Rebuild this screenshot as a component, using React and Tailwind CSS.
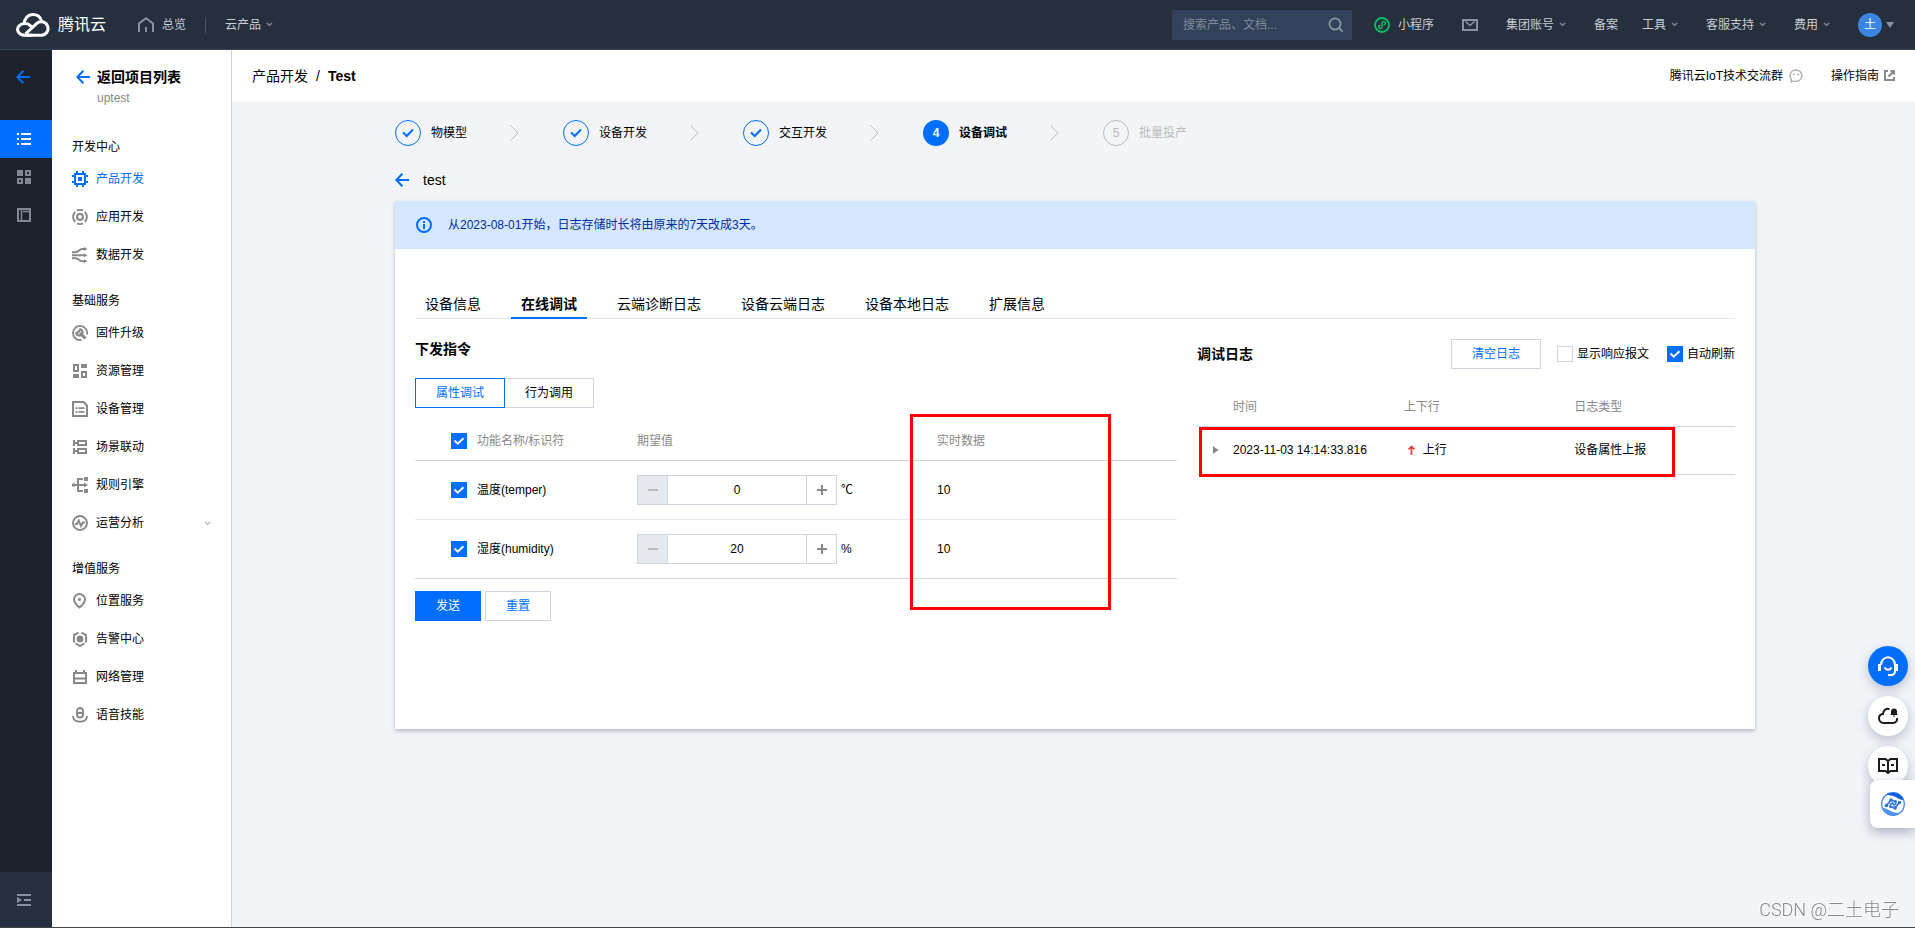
import { useState } from "react";

/* ---------- icons ---------- */

const CloudLogo = () => (
  <svg width="34" height="24" viewBox="0 0 34 24" fill="none" stroke="#fff" strokeWidth="3">
    <path d="M8 11.2C8.3 5.6 12 1.6 17 1.6c4 0 7.200 2.300 8.400 6" />
    <path d="M16.500 22.300H9a7.200 5.900 0 1 1 5-10l3.200 2.900" />
    <path d="M10.500 22.300h15a6.800 6.800 0 1 0-5-11.700L9.500 21" />
  </svg>
);

const HomeIcon = () => (
  <svg width="16" height="16" viewBox="0 0 16 16" fill="none" stroke="#8a929e" strokeWidth="2">
    <path d="M1 15V6.500L8 1.200l7 5.300V15" />
    <path d="M8 10v5" />
  </svg>
);

const Chevron = ({ color = "#7b8492" }) => (
  <svg width="7" height="5" viewBox="0 0 7 5" fill="none" stroke={color} strokeWidth="1.500">
    <path d="M1 1l2.500 2.500L6 1" />
  </svg>
);

const SearchIcon = () => (
  <svg width="16" height="16" viewBox="0 0 16 16" fill="none" stroke="#8b95a3" strokeWidth="1.800">
    <circle cx="7" cy="7" r="5.600" />
    <path d="M11 11l3.600 3.600" />
  </svg>
);

const MiniAppIcon = () => (
  <svg width="16" height="16" viewBox="0 0 16 16" fill="none" stroke="#07c160">
    <circle cx="8" cy="8" r="7" strokeWidth="1.800" />
    <path
      d="M6.300 8.100a1.700 1.700 0 1 0 1.700 1.900V6a1.700 1.700 0 1 1 1.700 1.900"
      strokeWidth="1.400"
    />
  </svg>
);

const MailIcon = () => (
  <svg width="16" height="12" viewBox="0 0 16 12" fill="none" stroke="#8a929e" strokeWidth="2">
    <path d="M1 1h14v10H1z" />
    <path d="M3.500 2.500L8 6.500l4.500-4" strokeWidth="1.600" />
  </svg>
);

const BackArrow = () => (
  <svg width="14" height="14" viewBox="0 0 14 14" fill="none" stroke="#006eff" strokeWidth="2">
    <path d="M7.300 .8L1.400 7l5.900 6.200M1.500 7H14" />
  </svg>
);

const ListIcon = () => (
  <svg width="14" height="12" viewBox="0 0 14 12" fill="#fff">
    <path d="M0 0h2v2H0zM4 0h10v2H4zM0 5h2v2H0zM4 5h10v2H4zM0 10h2v2H0zM4 10h10v2H4z" />
  </svg>
);

const BlocksIcon = () => (
  <svg width="14" height="14" viewBox="0 0 14 14" fill="#7f8893" fillRule="evenodd">
    <path d="M0 0h6v6H0zM8 0h6v6H8zM10 2v2h2V2zM0 8h6v6H0zM2 10v2h2v-2zM8 8h6v6H8z" />
  </svg>
);

const PanelIcon = () => (
  <svg width="14" height="14" viewBox="0 0 14 14" fill="none" stroke="#7f8893">
    <path d="M1 1h12v12H1z" strokeWidth="2" />
    <path d="M4.500 1v12M6 3.500h6" strokeWidth="1.500" />
  </svg>
);

const CollapseIcon = () => (
  <svg width="14" height="12" viewBox="0 0 14 12" fill="#8a929e">
    <path d="M0 0h14v2H0zM7 5h7v2H7zM0 10h14v2H0zM0 3l5 3-5 3z" />
  </svg>
);

const ExternalIcon = () => (
  <svg width="11" height="11" viewBox="0 0 11 11" fill="none" stroke="#888" strokeWidth="2">
    <path d="M4 1H1v9h9V7M6.500 1H10v3.500M10 1L4.500 6.500" />
  </svg>
);

const ChatIcon = () => (
  <svg width="14" height="14" viewBox="0 0 14 14" fill="none" stroke="#aaa" strokeWidth="1.300">
    <path d="M7 .8a6 5.800 0 1 1-2.300 11.200L2 13l.5-2.600A6 5.800 0 0 1 7 .8z" />
    <circle cx="4.800" cy="5.600" r="1" fill="#aaa" stroke="none" />
    <circle cx="9.200" cy="5.600" r="1" fill="#aaa" stroke="none" />
  </svg>
);

const menuIcons = {
  chip: (
    <>
      <path d="M3 3h10v10H3z" />
      <path d="M7 7h2v2H7z" />
      <path d="M5 0v2M11 0v2M5 14v2M11 14v2M0 5h2M0 11h2M14 5h2M14 11h2" />
    </>
  ),
  target: (
    <>
      <circle cx="8" cy="8" r="3" />
      <path
        strokeWidth="1.900"
        d="M5 1.600a7.200 7.200 0 0 1 6 0M5 14.400a7.200 7.200 0 0 0 6 0M3.200 3a7 7 0 0 0 0 10M12.800 3a7 7 0 0 1 0 10"
      />
    </>
  ),
  flow: (
    <>
      <path
        strokeWidth="2"
        d="M0 5.200h3.500C7 5.200 7 2 10.500 2H13M0 8.200h13M0 11.200h3.500c3.500 0 3.500 3 7 3H13"
      />
      <path fill="currentColor" stroke="none" d="M12 0l3.500 2L12 4zM12 6.200l3.500 2-3.500 2zM12 12.200l3.500 2-3.500 1.800z" />
    </>
  ),
  wrench: (
    <>
      <path strokeWidth="1.800" d="M9.500 15A7.100 7.100 0 1 1 15 9.500" />
      <path strokeWidth="3" d="M8 8l5.500 5.500" />
      <path strokeWidth="2.200" d="M8.300 4.300L6.800 6.800 4.300 8.300a3.300 3.300 0 0 0 5.700 1 3.300 3.300 0 0 0-1.700-5z" />
    </>
  ),
  grid: (
    <>
      <path d="M2 2h4v6H2zM11 9h3v5h-4V9z" />
      <path fill="currentColor" stroke="none" d="M9 1h6v4H9zM1 11h6v4H1z" />
    </>
  ),
  device: (
    <>
      <path d="M1 1h10.500L15 4.500V15H1z" />
      <path strokeWidth="1.800" d="M3.500 7.200h2M6.500 7.200h6M3.500 10.800h2M6.500 10.800h6" />
    </>
  ),
  scene: (
    <path d="M6 2h8v4H6zM6 10h8v4H6zM2 1v6M2 9v6M2 4h4M2 12h4" />
  ),
  rule: (
    <>
      <path strokeWidth="2" d="M0 8h13M6 8V2h5M6 8v6h5" />
      <path fill="currentColor" stroke="none" d="M12 0h4v4h-4zM12 12h4v4h-4zM12 5.500L16 8l-4 2.500zM0 6.500h3v3H0z" />
    </>
  ),
  pulse: (
    <>
      <circle cx="8" cy="8" r="7" strokeWidth="1.900" />
      <path strokeWidth="1.900" d="M3 9h2l1.700-3.500L9 11l1.800-3.500H13" />
    </>
  ),
  pin: (
    <>
      <path strokeWidth="2" d="M7.500 14.500C4 11.500 2 9 2 6.500a5.500 5.500 0 0 1 11 0c0 2.500-2 5-5.500 8z" />
      <circle cx="7.500" cy="6.500" r="1.600" fill="currentColor" stroke="none" />
    </>
  ),
  alarm: (
    <>
      <circle cx="8" cy="8" r="3.400" fill="currentColor" stroke="none" />
      <path d="M6.500 1.600L2 4.200v7.300M9.500 1.600L14 4.200v7.300M3.500 12.400L8 15l4.500-2.600" />
    </>
  ),
  network: <path d="M2 4h12v10H2zM2 9.500h12M4 1v3M12 1v3" />,
  voice: (
    <>
      <rect x="5" y="1" width="6" height="9.500" rx="3" strokeWidth="1.900" />
      <path strokeWidth="1.900" d="M5 6h6M1 9c0 3.500 3 5.700 7 5.700S15 12.500 15 9" />
    </>
  ),
};

const MenuIcon = ({ name }) => (
  <svg width="16" height="16" viewBox="0 0 16 16" fill="none" stroke="currentColor" strokeWidth="2">
    {menuIcons[name]}
  </svg>
);

/* ---------- data ---------- */

const menu = [
  {
    title: "开发中心",
    items: [
      { label: "产品开发", icon: "chip", active: true },
      { label: "应用开发", icon: "target" },
      { label: "数据开发", icon: "flow" },
    ],
  },
  {
    title: "基础服务",
    items: [
      { label: "固件升级", icon: "wrench" },
      { label: "资源管理", icon: "grid" },
      { label: "设备管理", icon: "device" },
      { label: "场景联动", icon: "scene" },
      { label: "规则引擎", icon: "rule" },
      { label: "运营分析", icon: "pulse", more: true },
    ],
  },
  {
    title: "增值服务",
    items: [
      { label: "位置服务", icon: "pin" },
      { label: "告警中心", icon: "alarm" },
      { label: "网络管理", icon: "network" },
      { label: "语音技能", icon: "voice" },
    ],
  },
];

const steps = [
  { label: "物模型", status: "done" },
  { label: "设备开发", status: "done" },
  { label: "交互开发", status: "done" },
  { label: "设备调试", status: "current" },
  { label: "批量投产", status: "todo" },
];

const tabs = ["设备信息", "在线调试", "云端诊断日志", "设备云端日志", "设备本地日志", "扩展信息"];

const properties = [
  { id: "temper", name: "温度(temper)", value: 0, unit: "℃", current: 10 },
  { id: "humidity", name: "湿度(humidity)", value: 20, unit: "%", current: 10 },
];

/* ---------- small parts ---------- */

const Checkbox = ({ label, defaultChecked, className = "", gap = "gap-1" }) => (
  <label className={`flex items-center ${gap} ${className}`}>
    <span className="relative block h-4 w-4 shrink-0">
      <input
        type="checkbox"
        defaultChecked={defaultChecked}
        className="peer block h-4 w-4 appearance-none border border-[#cfd5de] bg-white checked:border-[#006eff] checked:bg-[#006eff]"
      />
      <svg
        className="pointer-events-none absolute inset-0 hidden peer-checked:block"
        width="16"
        height="16"
        viewBox="0 0 16 16"
        fill="none"
        stroke="#fff"
        strokeWidth="2"
      >
        <path d="M3.500 7.500l3.200 3.200 5.800-5.400" />
      </svg>
    </span>
    {label}
  </label>
);

const NavDrop = ({ label }) => (
  <a href="#" className="flex items-center gap-[5px]">
    {label}
    <Chevron />
  </a>
);

const NumberInput = ({ label, initial }) => {
  const [value, setValue] = useState(initial);
  return (
    <div className="flex h-[30px] w-[200px] border border-[#cfd5de]">
      <button
        aria-label="减少"
        onClick={() => setValue(value - 1)}
        className="flex w-[30px] items-center justify-center border-r border-[#cfd5de] bg-[#e5e8ed]"
      >
        <span className="h-0.5 w-2.5 bg-[#bbb]" />
      </button>
      <input
        aria-label={label}
        value={value}
        onChange={(e) => setValue(Number(e.target.value) || 0)}
        className="min-w-0 flex-1 text-center outline-none"
      />
      <button
        aria-label="增加"
        onClick={() => setValue(value + 1)}
        className="flex w-[30px] items-center justify-center border-l border-[#cfd5de]"
      >
        <svg width="10" height="10" viewBox="0 0 10 10" stroke="#888" strokeWidth="2">
          <path d="M5 0v10M0 5h10" />
        </svg>
      </button>
    </div>
  );
};

/* ---------- page sections ---------- */

const Header = () => (
  <header className="flex h-[50px] items-center border-b border-[#3a4351] bg-[#262f3e] pr-[21px] pl-4 text-[#c8cdd5]">
    <a href="#" className="flex items-center gap-2 text-base text-white">
      <CloudLogo />
      腾讯云
    </a>
    <a href="#" className="ml-8 flex items-center gap-2">
      <HomeIcon />
      总览
    </a>
    <span className="mx-[19px] h-4 w-px bg-[#4b5462]" />
    <NavDrop label="云产品" />

    <div className="ml-auto flex items-center gap-7">
      <div className="flex items-center gap-[22px]">
        <div className="flex h-[30px] w-[180px] items-center bg-[#33425a] pr-2 pl-[11px]">
          <input
            aria-label="搜索"
            placeholder="搜索产品、文档..."
            className="min-w-0 flex-1 outline-none placeholder:text-[#808a99]"
          />
          <button aria-label="搜索按钮">
            <SearchIcon />
          </button>
        </div>
        <a href="#" className="flex items-center gap-2">
          <MiniAppIcon />
          小程序
        </a>
      </div>
      <a href="#" aria-label="站内信">
        <MailIcon />
      </a>
      <NavDrop label="集团账号" />
      <div className="flex items-center gap-6">
        <a href="#">备案</a>
        <NavDrop label="工具" />
      </div>
      <NavDrop label="客服支持" />
      <NavDrop label="费用" />
      <button className="flex items-center gap-1">
        <span className="flex h-6 w-6 items-center justify-center rounded-full bg-[#3b86e0] text-xs text-white">
          土
        </span>
        <svg width="8" height="6" viewBox="0 0 8 6" fill="#8a929e">
          <path d="M0 0h8L4 6z" />
        </svg>
      </button>
    </div>
  </header>
);

const Rail = () => (
  <nav className="flex w-[52px] shrink-0 flex-col bg-[#1e222d] *:flex *:items-center *:pl-4">
    <a href="#" aria-label="返回" className="mt-2 h-[38px]">
      <BackArrow />
    </a>
    <a href="#" aria-label="产品" className="mt-6 h-[38px] bg-[#006eff] pl-[17px]!">
      <ListIcon />
    </a>
    <a href="#" aria-label="应用" className="h-[38px] pl-[17px]!">
      <BlocksIcon />
    </a>
    <a href="#" aria-label="文档" className="h-[38px] pl-[17px]!">
      <PanelIcon />
    </a>
    <button aria-label="展开" className="mt-auto h-[55px] bg-[#262f3e] pl-[17px]!">
      <CollapseIcon />
    </button>
  </nav>
);

const Sidebar = () => (
  <aside className="w-[180px] shrink-0 border-r border-[#cfd5e0] bg-white">
    <div className="px-6 pt-4">
      <a href="#" className="flex h-[22px] items-center gap-[7px] text-sm font-bold">
        <BackArrow />
        返回项目列表
      </a>
      <p className="pl-[21px] leading-5 text-[#888]">uptest</p>
    </div>
    <div className="pt-3">
      {menu.map((group) => (
        <div key={group.title}>
          <h3 className="flex h-10 items-center px-5 pt-3.5">{group.title}</h3>
          {group.items.map((item) => (
            <a
              key={item.label}
              href="#"
              className={`flex h-[38px] items-center gap-2 px-5 ${
                item.active ? "text-[#006eff]" : ""
              }`}
            >
              <span className={item.active ? "" : "text-[#888]"}>
                <MenuIcon name={item.icon} />
              </span>
              {item.label}
              {item.more && (
                <span className="ml-auto">
                  <Chevron color="#bbb" />
                </span>
              )}
            </a>
          ))}
        </div>
      ))}
    </div>
  </aside>
);

const Steps = () => (
  <ol className="flex items-center">
    {steps.map((step, i) => (
      <li key={step.label} className="flex items-center">
        {i > 0 && (
          <svg
            className="mr-11 ml-[43px]"
            width="9"
            height="16"
            viewBox="0 0 9 16"
            fill="none"
            stroke="#bbb"
          >
            <path d="M.5.5L8 8 .5 15.500" />
          </svg>
        )}
        {step.status === "done" && (
          <span className="flex h-[26px] w-[26px] items-center justify-center rounded-full border border-[#006eff]">
            <svg width="12" height="10" viewBox="0 0 12 10" fill="none" stroke="#006eff" strokeWidth="2">
              <path d="M1 4.500l3.700 3.500L11 1.500" />
            </svg>
          </span>
        )}
        {step.status === "current" && (
          <span className="flex h-[26px] w-[26px] items-center justify-center rounded-full bg-[#006eff] font-bold text-white">
            {i + 1}
          </span>
        )}
        {step.status === "todo" && (
          <span className="flex h-[26px] w-[26px] items-center justify-center rounded-full border border-[#bbb] text-[#bbb]">
            {i + 1}
          </span>
        )}
        <span
          className={`ml-2.5 ${step.status === "current" ? "font-bold" : ""} ${
            step.status === "todo" ? "text-[#bbb]" : ""
          }`}
        >
          {step.label}
        </span>
      </li>
    ))}
  </ol>
);

const CommandPanel = () => (
  <section>
    <h3 className="pt-5 text-sm leading-5 font-bold">下发指令</h3>
    <div className="mt-[19px] flex">
      <button className="h-[30px] w-[90px] border border-[#006eff] text-[#006eff]">属性调试</button>
      <button className="h-[30px] w-[89px] border border-l-0 border-[#cfd5de]">行为调用</button>
    </div>
    <div className="relative mt-3">
      <table className="w-full table-fixed text-left">
        <thead>
          <tr className="h-10 border-b border-[#cfd5de] text-[#888]">
            <th className="w-[212px] pt-0.5 pl-9 font-normal">
              <Checkbox defaultChecked label="功能名称/标识符" gap="gap-2.5" />
            </th>
            <th className="w-[300px] pt-0.5 pl-2.5 font-normal">期望值</th>
            <th className="pt-0.5 pl-2.5 font-normal">实时数据</th>
          </tr>
        </thead>
        <tbody>
          {properties.map((p) => (
            <tr key={p.id} className="h-[59px] border-b border-[#e5e8ed] last:border-[#cfd5de]">
              <td className="pl-9">
                <Checkbox defaultChecked label={p.name} gap="gap-2.5" />
              </td>
              <td className="pl-2.5">
                <div className="flex items-center gap-1">
                  <NumberInput label={p.name} initial={p.value} />
                  {p.unit}
                </div>
              </td>
              <td className="pl-2.5">{p.current}</td>
            </tr>
          ))}
        </tbody>
      </table>
      <div className="pointer-events-none absolute -top-1.5 left-[495px] h-[196px] w-[201px] border-3 border-[#f00]" />
    </div>
    <div className="mt-3 flex gap-1">
      <button className="h-[30px] w-[66px] bg-[#006eff] text-white">发送</button>
      <button className="h-[30px] w-[66px] border border-[#cfd5de] text-[#006eff]">重置</button>
    </div>
  </section>
);

const LogPanel = () => (
  <section>
    <div className="flex items-center pt-5">
      <h3 className="text-sm font-bold">调试日志</h3>
      <button className="ml-auto h-[30px] w-[90px] border border-[#cfd5de] text-[#006eff]">
        清空日志
      </button>
      <Checkbox label="显示响应报文" className="ml-4" />
      <Checkbox defaultChecked label="自动刷新" className="ml-[18px]" />
    </div>
    <div className="relative mt-[17px]">
      <table className="w-full table-fixed text-left">
        <thead>
          <tr className="h-10 border-b border-[#cfd5de] text-[#888]">
            <th className="w-[26px]" />
            <th className="pt-0.5 pl-2.5 font-normal">时间</th>
            <th className="pt-0.5 pl-2.5 font-normal">上下行</th>
            <th className="pt-0.5 pl-2.5 font-normal">日志类型</th>
          </tr>
        </thead>
        <tbody>
          <tr className="h-12 border-b border-[#cfd5de]">
            <td className="pl-4">
              <button aria-label="展开日志" className="block">
                <svg width="6" height="8" viewBox="0 0 6 8" fill="#888">
                  <path d="M0 0l5.500 4L0 8z" />
                </svg>
              </button>
            </td>
            <td className="pl-2.5 whitespace-nowrap">2023-11-03 14:14:33.816</td>
            <td className="pl-2.5">
              <div className="flex items-center gap-2 pl-1">
                <svg width="7" height="10" viewBox="0 0 7 10" fill="none" stroke="#e54545" strokeWidth="1.800">
                  <path d="M3.500 10V1.500M.6 4.400l2.900-2.900 2.900 2.900" />
                </svg>
                上行
              </div>
            </td>
            <td className="pl-2.5">设备属性上报</td>
          </tr>
        </tbody>
      </table>
      <div className="pointer-events-none absolute top-[41px] left-0.5 h-[50px] w-[476px] border-3 border-[#f00]" />
    </div>
  </section>
);

const FloatingTools = () => (
  <div className="fixed top-[646px] right-0 flex w-[47px] flex-col gap-2.5">
    <button
      aria-label="在线客服"
      className="flex h-10 w-10 items-center justify-center rounded-full bg-[#006eff] shadow-[0_4px_12px_rgba(55,70,110,0.3)]"
    >
      <svg width="20" height="20" viewBox="0 0 20 20" fill="none" stroke="#fff" strokeWidth="2">
        <path d="M3 9a7 7.800 0 0 1 14 0v6c0 2.500-1.500 4-4 4h-3" />
        <path d="M1.500 8v7M18.500 8v7" strokeWidth="3" />
        <path d="M6.500 11.500c1.500 3 5.500 3 7 0" />
      </svg>
    </button>
    <button
      aria-label="云通知"
      className="flex h-10 w-10 items-center justify-center rounded-full bg-white shadow-[0_4px_12px_rgba(55,70,110,0.3)]"
    >
      <svg width="20" height="20" viewBox="0 0 20 20" fill="none" stroke="#1b1b1b" strokeWidth="2">
        <path d="M11.500 3.200C8 2 5.200 4.300 5 8c-2.500.3-4 2-4 4.300C1 15 2.800 17 5.500 17h9.300c3 0 4.500-2 4.200-4.800" />
        <path d="M13 8V5.500a3 3 0 0 1 6 0V8l.8 1h-7.600zM15 9.500h2v1h-2z" fill="#1b1b1b" stroke="none" />
      </svg>
    </button>
    <button
      aria-label="文档"
      className="flex h-10 w-10 items-center justify-center rounded-full bg-white shadow-[0_4px_12px_rgba(55,70,110,0.3)]"
    >
      <svg width="20" height="18" viewBox="0 0 20 18" fill="none" stroke="#1b1b1b" strokeWidth="2">
        <path d="M10 4L7.500 2H1v12h6.500l2.500 2 2.500-2H19V2h-6.500zM10 4v13M4 8h3M13 8h3" />
      </svg>
    </button>
    <button
      aria-label="助手"
      className="absolute right-0 bottom-[-42px] flex h-12 w-[45px] items-center rounded-l-lg bg-white pl-[11px] shadow-[0_4px_12px_rgba(55,70,110,0.4)]"
    >
      <svg width="24" height="24" viewBox="0 0 24 24" fill="none">
        <circle cx="12" cy="12" r="11.300" stroke="#3b82f0" strokeWidth="1.200" />
        <path d="M5 3C10-.8 20-.5 22.500 8 18 8.500 14 2.500 5 3z" fill="#0a5fe0" />
        <path d="M19 21C14 24.800 4 24.500 1.500 16 6 15.500 10 21.500 19 21z" fill="#4d93f7" />
        <g stroke="#2b72e6" strokeWidth="1.600">
          <path d="M5.500 13.500l4.500-5.500 4 1.500M18.500 10.500L14 16l-4-1.500" />
          <path d="M9 12.500l2.500-1.500 1.500 2 2.500-1.500" />
        </g>
        <g fill="#2b72e6">
          <circle cx="5.500" cy="13.500" r="1.800" />
          <circle cx="10" cy="8" r="1.800" />
          <circle cx="14.500" cy="9.500" r="1.500" />
          <circle cx="18.500" cy="10.500" r="1.800" />
          <circle cx="14" cy="16" r="1.800" />
          <circle cx="9.500" cy="14.500" r="1.500" />
        </g>
      </svg>
    </button>
  </div>
);

export default function App() {
  return (
    <div className="flex min-h-screen flex-col bg-[#f2f4f8] font-['Liberation_Sans','Noto_Sans_CJK_SC',sans-serif] text-xs text-black">
      <Header />
      <div className="flex flex-1 border-b border-[#444]">
        <Rail />
        <Sidebar />
        <main className="min-w-0 flex-1">
          <div className="flex h-[51px] items-center bg-white pr-5 pl-5">
            <nav className="flex items-center gap-2 text-sm">
              <a href="#">产品开发</a>
              <span>/</span>
              <span className="font-bold">Test</span>
            </nav>
            <a href="#" className="ml-auto flex items-center gap-1.5">
              腾讯云IoT技术交流群
              <ChatIcon />
            </a>
            <a href="#" className="ml-7 flex items-center gap-[5px]">
              操作指南
              <ExternalIcon />
            </a>
          </div>

          <div className="pt-[19px] pr-40 pl-[163px]">
            <Steps />
            <a href="#" className="mt-[23px] flex h-[21px] items-center gap-3.5 text-sm">
              <BackArrow />
              test
            </a>

            <div className="mt-[11px] bg-white pb-[108px] shadow-[0_2px_4px_rgba(54,58,80,0.32)]">
              <div className="flex h-12 items-center gap-4 bg-[#d5e7ff] px-[21px] text-[#002da0]">
                <svg width="16" height="16" viewBox="0 0 16 16" fill="none" stroke="#006eff" strokeWidth="2">
                  <circle cx="8" cy="8" r="7" />
                  <path d="M8 7v5M8 4v2" />
                </svg>
                从2023-08-01开始，日志存储时长将由原来的7天改成3天。
              </div>

              <div className="px-5 pt-10">
                <div role="tablist" className="flex gap-5 border-b border-[#e5e8ed] text-sm">
                  {tabs.map((tab, i) => (
                    <button
                      key={tab}
                      role="tab"
                      aria-selected={i === 1}
                      className={`-mb-px h-[30px] border-b-2 px-2.5 pt-0.5 ${
                        i === 1 ? "border-[#006eff] font-bold" : "border-transparent"
                      }`}
                    >
                      {tab}
                    </button>
                  ))}
                </div>
                <div className="grid grid-cols-[762fr_538fr] gap-5">
                  <CommandPanel />
                  <LogPanel />
                </div>
              </div>
            </div>
          </div>
        </main>
      </div>

      <FloatingTools />
      <p className="fixed right-4 bottom-1 font-['Roboto','Noto_Sans_CJK_SC',sans-serif] text-lg font-light text-[#85888f] [text-shadow:-1px_-1px_0_#fff]">
        CSDN @二土电子
      </p>
    </div>
  );
}
